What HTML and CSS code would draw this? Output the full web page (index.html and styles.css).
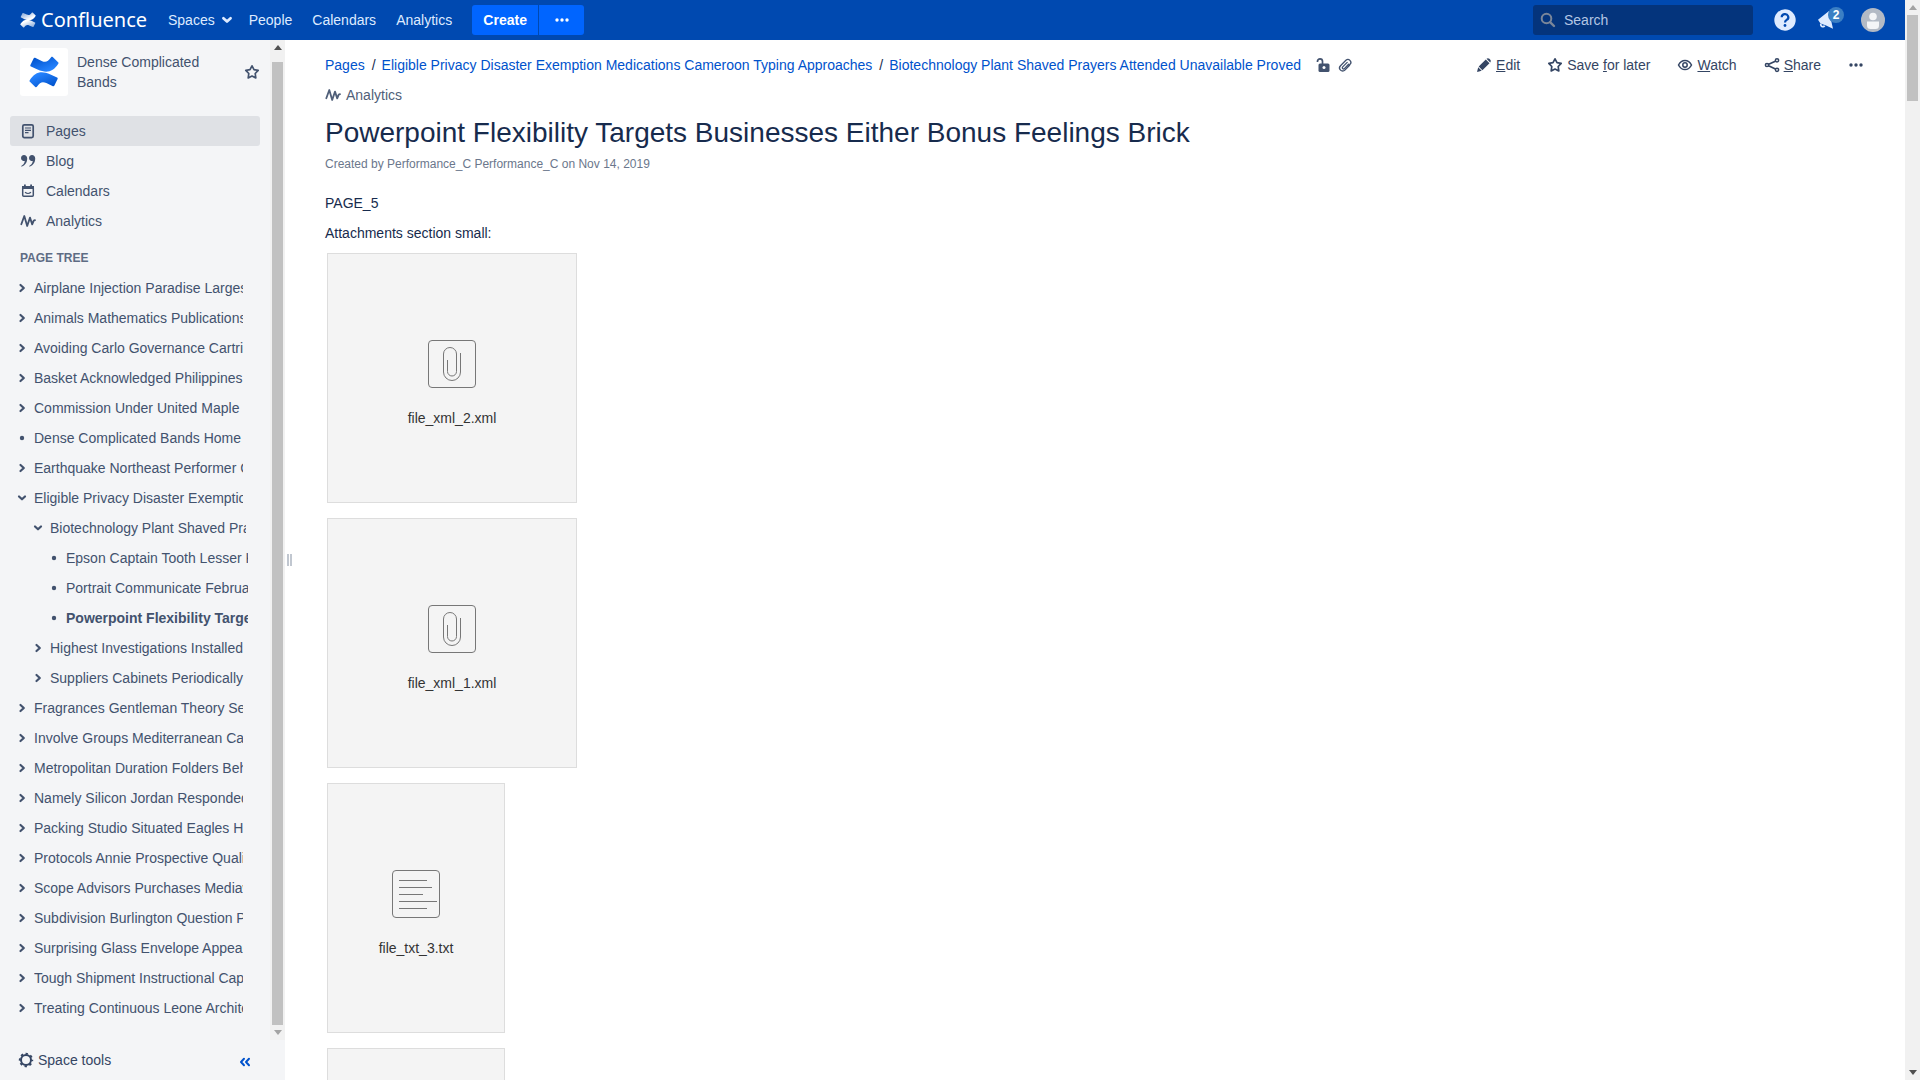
FILE: index.html
```
<!DOCTYPE html>
<html lang="en">
<head>
<meta charset="utf-8">
<title>Powerpoint Flexibility Targets Businesses Either Bonus Feelings Brick - Confluence</title>
<link rel="stylesheet" href="styles.css">
</head>
<body>
<svg class="defs" aria-hidden="true">
  <defs>
    <linearGradient id="mark-top" x1="1" y1="1" x2="0.2" y2="0"><stop offset="0.2" stop-color="#2684ff"/><stop offset="1" stop-color="#0052cc"/></linearGradient>
    <linearGradient id="mark-bottom" x1="0" y1="0" x2="0.8" y2="1"><stop offset="0.2" stop-color="#2684ff"/><stop offset="1" stop-color="#0052cc"/></linearGradient>
    <linearGradient id="white-top" x1="1" y1="1" x2="0.1" y2="0"><stop offset="0.3" stop-color="#fff"/><stop offset="1" stop-color="#fff" stop-opacity="0.5"/></linearGradient>
    <linearGradient id="white-bottom" x1="0" y1="0" x2="0.9" y2="1"><stop offset="0.3" stop-color="#fff"/><stop offset="1" stop-color="#fff" stop-opacity="0.5"/></linearGradient>
    <symbol id="right" viewBox="0 0 10 10"><path d="M3.500 2 6.800 5 3.500 8" fill="none" stroke="currentColor" stroke-width="2.200" stroke-linecap="round" stroke-linejoin="round"/></symbol>
    <symbol id="down" viewBox="0 0 10 10"><path d="M2 3.500 5 6.300 8 3.500" fill="none" stroke="currentColor" stroke-width="2.200" stroke-linecap="round" stroke-linejoin="round"/></symbol>
    <symbol id="dot" viewBox="0 0 10 10"><circle cx="5" cy="5" r="2.200" fill="currentColor"/></symbol>
    <symbol id="pulse" viewBox="0 0 16 16"><path d="M1.300 11.200 4.300 3 7.200 13 10 4.600 12.200 11.400 13.700 7.600 15 7.200" fill="none" stroke="currentColor" stroke-width="1.800" stroke-linecap="round" stroke-linejoin="round"/></symbol>
    <symbol id="star" viewBox="0 0 16 16"><path d="M8 1.800 10 5.700 14.200 6.400 11.200 9.500 11.800 13.900 8 12 4.200 13.900 4.800 9.500 1.800 6.400 6 5.700Z" fill="none" stroke="currentColor" stroke-width="1.700" stroke-linejoin="round"/></symbol>
    <symbol id="more" viewBox="0 0 16 16"><g fill="currentColor"><circle cx="3" cy="8" r="1.700"/><circle cx="8" cy="8" r="1.700"/><circle cx="13" cy="8" r="1.700"/></g></symbol>
    <symbol id="clipfile" viewBox="0 0 48 48"><g fill="none" stroke="#777" stroke-width="1"><rect x="0.500" y="0.500" width="47" height="47" rx="3.500"/><path d="M19.500 20V31.500a4.500 4.500 0 0 0 9 0V14a6.500 6.500 0 0 0-13 0V32a8.500 8.500 0 0 0 17 0V13"/></g></symbol>
    <symbol id="textfile" viewBox="0 0 48 48"><g fill="none" stroke="#777" stroke-width="1"><rect x="0.500" y="0.500" width="47" height="47" rx="3.500"/><path d="M7 10.500h28M7 17.500h33M7 24.500h24M7 31.500h38M7 38.500h28"/></g></symbol>
  </defs>
</svg>

<div class="window">
  <header class="topbar">
    <a class="brand" href="#">
      <svg width="16" height="16" viewBox="0 0 32 32"><path fill="url(#white-top)" d="M31 6.500 25.300 1.100C24.700.6 24 .7 23.600 1.300 20 6.500 17.500 7 13.500 5.200L6.500 1.900C5.800 1.600 5.200 1.900 4.900 2.500L1.500 9.500c-.3.700 0 1.300.6 1.600l7 3.300C19 18.800 25.500 17 31.200 8.200c.4-.6.400-1.200-.2-1.700Z"/><path fill="url(#white-bottom)" d="M1 25.500l5.700 5.400c.6.500 1.300.4 1.700-.2C12 25.500 14.500 25 18.500 26.800l7 3.300c.7.300 1.300 0 1.600-.6l3.400-7c.3-.7 0-1.300-.6-1.600l-7-3.300C13 13.200 6.500 15 .8 23.800c-.4.600-.4 1.200.2 1.700Z"/></svg>
      <span>Confluence</span>
    </a>
    <nav class="mainnav">
      <a href="#">Spaces <svg width="12" height="12"><use href="#down"/></svg></a>
      <a href="#">People</a>
      <a href="#">Calendars</a>
      <a href="#">Analytics</a>
    </nav>
    <div class="create">
      <button type="button">Create</button>
      <button type="button" aria-label="Create from template"><svg width="16" height="16"><use href="#more"/></svg></button>
    </div>
    <label class="search">
      <svg width="16" height="16" viewBox="0 0 16 16"><circle cx="6.500" cy="6.500" r="4.800" fill="none" stroke="#7a8699" stroke-width="2"/><path d="M10.300 10.300 14 14" stroke="#7a8699" stroke-width="2.400" stroke-linecap="round"/></svg>
      <input type="text" placeholder="Search" aria-label="Search">
    </label>
    <button class="iconbtn" type="button" aria-label="Help"><svg width="22" height="22" viewBox="0 0 22 22"><circle cx="11" cy="11" r="10.700" fill="#deebff"/><path d="M7.700 8.300a3.300 3.100 0 1 1 5 2.600c-1.200.8-1.700 1.200-1.700 2.600" fill="none" stroke="#0049b0" stroke-width="2.200"/><circle cx="11" cy="16.500" r="1.400" fill="#0049b0"/></svg></button>
    <button class="iconbtn notify" type="button" aria-label="Notifications"><svg width="20" height="20" viewBox="0 0 20 20"><path d="M1 9.800 12 1 16 18.800 8.500 15.200 3.500 13.500Z" fill="#deebff"/><path d="M4 13.800a2 2 0 1 0 3.600 1.800" fill="none" stroke="#deebff" stroke-width="1.800"/></svg><span class="badge">2</span></button>
    <button class="iconbtn" type="button" aria-label="Profile"><svg width="24" height="24" viewBox="0 0 24 24"><circle cx="12" cy="12" r="12" fill="#b3bac5"/><circle cx="12" cy="8.500" r="3.800" fill="#f4f5f7"/><path d="M6 13.500h12v4a3.500 3.500 0 0 1-3.500 3.500h-5A3.500 3.500 0 0 1 6 17.500Z" fill="#f4f5f7"/></svg></button>
  </header>

  <aside class="sidebar">
    <div class="sidescroll">
      <div class="sidecontent">
        <div class="space">
          <a class="spacelogo" href="#" aria-label="Space home"><svg width="30" height="32" viewBox="0 0 32 34"><path fill="url(#mark-top)" d="M31 6.500 25.300 1.100C24.700.6 24 .7 23.600 1.300 20 6.500 17.500 7 13.500 5.200L6.500 1.900C5.800 1.600 5.200 1.900 4.900 2.500L1.500 9.500c-.3.700 0 1.300.6 1.600l7 3.300C19 18.800 25.500 17 31.200 8.200c.4-.6.400-1.200-.2-1.700Z"/><path fill="url(#mark-bottom)" d="M1 27.500l5.700 5.400c.6.500 1.300.4 1.700-.2C12 27.500 14.500 27 18.500 28.800l7 3.300c.7.300 1.300 0 1.600-.6l3.400-7c.3-.7 0-1.300-.6-1.600l-7-3.300C13 15.200 6.500 17 .8 25.800c-.4.600-.4 1.200.2 1.700Z"/></svg></a>
          <a class="spacename" href="#">Dense Complicated Bands</a>
          <button class="plain" type="button" aria-label="Star space"><svg width="16" height="16"><use href="#star"/></svg></button>
        </div>
        <nav class="spacenav">
          <a class="current" href="#"><svg width="16" height="16" viewBox="0 0 16 16"><rect x="2.800" y="1.800" width="10.400" height="12.800" rx="1.500" fill="none" stroke="currentColor" stroke-width="1.700"/><path d="M5 5h6M5 7.300h6M5 9.600h3.500" stroke="currentColor" stroke-width="1.200"/></svg>Pages</a>
          <a href="#"><svg width="16" height="16" viewBox="0 0 16 16"><path id="comma" d="M4 2a3 3 0 1 0 .8 5.900C4.500 10 3.200 11.800 1.200 13 1 13.400 1.400 13.700 1.800 13.600 5.500 12.300 7.300 8.800 7.200 5.200 7.200 3.300 5.800 2 4 2Z" fill="currentColor"/><use href="#comma" x="8"/></svg>Blog</a>
          <a href="#"><svg width="16" height="16" viewBox="0 0 16 16"><rect x="2.700" y="3.700" width="10.600" height="9.600" rx="1" fill="none" stroke="currentColor" stroke-width="1.500"/><path d="M2 3h12v3H2ZM4 1.500h1.800V4H4ZM10.200 1.500H12V4h-1.800Z" fill="currentColor"/><path d="M5 9.300q3 2.400 6 0" fill="none" stroke="currentColor" stroke-width="1.200"/></svg>Calendars</a>
          <a href="#"><svg width="16" height="16"><use href="#pulse"/></svg>Analytics</a>
        </nav>
        <h2 class="treetitle">Page tree</h2>
        <ul class="tree">
          <li><svg><use href="#right"/></svg><a href="#">Airplane Injection Paradise Largest</a></li>
          <li><svg><use href="#right"/></svg><a href="#">Animals Mathematics Publications</a></li>
          <li><svg><use href="#right"/></svg><a href="#">Avoiding Carlo Governance Cartridge</a></li>
          <li><svg><use href="#right"/></svg><a href="#">Basket Acknowledged Philippines</a></li>
          <li><svg><use href="#right"/></svg><a href="#">Commission Under United Maple</a></li>
          <li><svg><use href="#dot"/></svg><a href="#">Dense Complicated Bands Home</a></li>
          <li><svg><use href="#right"/></svg><a href="#">Earthquake Northeast Performer Consists</a></li>
          <li><svg><use href="#down"/></svg><a href="#">Eligible Privacy Disaster Exemption</a></li>
          <li class="level2"><svg><use href="#down"/></svg><a href="#">Biotechnology Plant Shaved Prayers</a></li>
          <li class="level3"><svg><use href="#dot"/></svg><a href="#">Epson Captain Tooth Lesser Keeping</a></li>
          <li class="level3"><svg><use href="#dot"/></svg><a href="#">Portrait Communicate February</a></li>
          <li class="level3 active"><svg><use href="#dot"/></svg><a href="#">Powerpoint Flexibility Targets</a></li>
          <li class="level2"><svg><use href="#right"/></svg><a href="#">Highest Investigations Installed</a></li>
          <li class="level2"><svg><use href="#right"/></svg><a href="#">Suppliers Cabinets Periodically</a></li>
          <li><svg><use href="#right"/></svg><a href="#">Fragrances Gentleman Theory Sexual</a></li>
          <li><svg><use href="#right"/></svg><a href="#">Involve Groups Mediterranean Care</a></li>
          <li><svg><use href="#right"/></svg><a href="#">Metropolitan Duration Folders Behind</a></li>
          <li><svg><use href="#right"/></svg><a href="#">Namely Silicon Jordan Responded</a></li>
          <li><svg><use href="#right"/></svg><a href="#">Packing Studio Situated Eagles Hours</a></li>
          <li><svg><use href="#right"/></svg><a href="#">Protocols Annie Prospective Quality</a></li>
          <li><svg><use href="#right"/></svg><a href="#">Scope Advisors Purchases Mediawiki</a></li>
          <li><svg><use href="#right"/></svg><a href="#">Subdivision Burlington Question Place</a></li>
          <li><svg><use href="#right"/></svg><a href="#">Surprising Glass Envelope Appears</a></li>
          <li><svg><use href="#right"/></svg><a href="#">Tough Shipment Instructional Cape</a></li>
          <li><svg><use href="#right"/></svg><a href="#">Treating Continuous Leone Architect</a></li>
        </ul>
      </div>
      <div class="scrollbar" aria-hidden="true"><i class="up dark"></i><i class="thumb"></i><i class="down"></i></div>
    </div>
    <div class="sidefoot">
      <button class="plain tools" type="button"><svg width="16" height="16" viewBox="0 0 16 16"><circle cx="8" cy="8" r="5" fill="none" stroke="currentColor" stroke-width="2"/><circle cx="8" cy="8" r="6.300" fill="none" stroke="currentColor" stroke-width="1.800" stroke-dasharray="2.400 2.550" stroke-dashoffset="1.200"/></svg>Space tools</button>
      <button class="plain collapse" type="button" aria-label="Collapse sidebar"><svg width="12" height="12" viewBox="0 0 12 12"><path d="M5 2.800 2 6 5 9.200M10 2.800 7 6 10 9.200" fill="none" stroke="currentColor" stroke-width="2" stroke-linecap="round" stroke-linejoin="round"/></svg></button>
    </div>
  </aside>

  <div class="splitter" aria-hidden="true"><i></i><i></i></div>

  <main class="content">
    <div class="pagetop">
      <div class="crumbs">
        <a href="#">Pages</a><span>/</span><a href="#">Eligible Privacy Disaster Exemption Medications Cameroon Typing Approaches</a><span>/</span><a href="#">Biotechnology Plant Shaved Prayers Attended Unavailable Proved</a>
        <div class="meta">
          <button class="plain" type="button" aria-label="Unrestricted"><svg width="16" height="16" viewBox="0 0 16 16"><rect x="3.500" y="6.500" width="11" height="8.500" rx="1.500" fill="currentColor"/><path d="M2.500 5V4.300a2.500 2.500 0 0 1 5 0V7.500" fill="none" stroke="currentColor" stroke-width="1.700"/><circle cx="9" cy="10.500" r="1.500" fill="#fff"/></svg></button>
          <button class="plain" type="button" aria-label="Attachments"><svg width="16" height="16" viewBox="0 0 16 16"><path d="M12.400 8.200 13 7.400A2.900 2.900 0 0 0 8.900 3.300L3.500 8.700A3.100 3.100 0 0 0 7.900 13.100L12.600 8.200M10.200 5.400 5.700 9.900A1.200 1.200 0 0 0 7.400 11.600L11.600 7.300" fill="none" stroke="currentColor" stroke-width="1.300" stroke-linecap="round"/></svg></button>
        </div>
      </div>
      <div class="actions">
        <a href="#"><svg width="16" height="16" viewBox="0 0 16 16"><path d="M9.800 2.500 13.500 6.200 6.400 13.200 2.700 9.600ZM10.500 1.800C11.300 1 12.400.9 13.400 1.800 14.900 3 15.200 4.300 14.200 5.500ZM2.200 10.300 5.700 13.800 1 15Z" fill="currentColor"/></svg><span><u>E</u>dit</span></a>
        <a href="#"><svg width="16" height="16"><use href="#star"/></svg><span>Save <u>f</u>or later</span></a>
        <a href="#"><svg width="16" height="16" viewBox="0 0 16 16"><path d="M1.500 8C3 5.100 5.300 3.400 8 3.400S13 5.100 14.500 8C13 10.900 10.700 12.600 8 12.600S3 10.900 1.500 8Z" fill="none" stroke="currentColor" stroke-width="1.500"/><circle cx="8" cy="8" r="2.200" fill="none" stroke="currentColor" stroke-width="1.500"/></svg><span><u>W</u>atch</span></a>
        <a href="#"><svg width="16" height="16" viewBox="0 0 16 16"><path d="M3 8 13 3.500M3 8 13 12.800" stroke="currentColor" stroke-width="1.700"/><g fill="#fff" stroke="currentColor" stroke-width="1.500"><circle cx="3" cy="8" r="1.600"/><circle cx="13" cy="3.300" r="1.600"/><circle cx="13" cy="12.800" r="1.600"/></g></svg><span><u>S</u>hare</span></a>
        <button class="plain" type="button" aria-label="More actions"><svg width="16" height="16"><use href="#more"/></svg></button>
      </div>
    </div>
    <a class="analytics" href="#"><svg width="16" height="16"><use href="#pulse"/></svg>Analytics</a>
    <h1>Powerpoint Flexibility Targets Businesses Either Bonus Feelings Brick</h1>
    <p class="byline">Created by Performance_C Performance_C on Nov 14, 2019</p>
    <p>PAGE_5</p>
    <p>Attachments section small:</p>
    <div class="files">
      <a class="file" href="#"><svg width="48" height="48"><use href="#clipfile"/></svg>file_xml_2.xml</a>
      <a class="file" href="#"><svg width="48" height="48"><use href="#clipfile"/></svg>file_xml_1.xml</a>
      <a class="file narrow" href="#"><svg width="48" height="48"><use href="#textfile"/></svg>file_txt_3.txt</a>
      <a class="file narrow" href="#" aria-label="Text file"></a>
    </div>
  </main>

  <div class="scrollbar pagebar" aria-hidden="true"><i class="up"></i><i class="thumb"></i><i class="down dark"></i></div>
</div>
</body>
</html>
```
FILE: styles.css
```
* { box-sizing: border-box; }
body { margin: 0; font: 14px/20px "Liberation Sans", Arial, sans-serif; color: #172b4d; background: #fff; }
a { color: inherit; text-decoration: none; }
button { font: inherit; border: 0; padding: 0; cursor: pointer; }
svg { display: block; flex: none; }
.defs { position: absolute; width: 0; height: 0; }
.plain { background: none; color: inherit; }

.window {
  display: grid;
  grid-template: 40px minmax(0, 1fr) / 285px 8px minmax(0, 1fr) 15px;
  height: 100vh;
  overflow: hidden;
}

/* Top bar */
.topbar { grid-column: 1 / 4; display: flex; align-items: center; padding: 0 20px; background: #0049b0; color: #deebff; }
.brand { display: flex; align-items: center; gap: 5px; width: 138px; color: #fff; font: 20px/28px "Noto Sans", sans-serif; }
.mainnav { display: flex; gap: 20px; padding: 0 20px 0 10px; }
.mainnav a { display: flex; align-items: center; gap: 6px; }
.mainnav a:first-child { margin-right: -4px; }
.create { display: flex; gap: 1px; }
.create button { display: grid; place-items: center; height: 30px; width: 45px; background: #0065ff; color: #fff; font-weight: bold; border-radius: 0 3px 3px 0; }
.create button:first-child { width: 66px; border-radius: 3px 0 0 3px; }
.search { display: flex; align-items: center; gap: 6px; width: 220px; height: 30px; margin: 0 20px 0 auto; padding: 0 7px; background: #04347c; border-radius: 3px; }
.search input { width: 100%; min-width: 0; padding: 0 2px; border: 0; outline: 0; background: none; font: inherit; color: #deebff; }
.search input::placeholder { color: #b3c6e4; opacity: 1; }
.iconbtn { position: relative; background: none; margin-left: 20px; }
.search + .iconbtn { margin-left: 1px; }
.iconbtn + .iconbtn { margin-left: 21px; }
.iconbtn.notify + .iconbtn { margin-left: 24px; }
.badge { position: absolute; left: 11px; top: -3px; width: 16px; height: 16px; border-radius: 8px; background: #3b7fc4; color: #fff; font: bold 12px/16px "Liberation Sans", sans-serif; }

/* Sidebar */
.sidebar { display: flex; flex-direction: column; min-height: 0; background: #f4f5f7; color: #42526e; }
.sidescroll { flex: 1; display: flex; min-height: 0; }
.sidecontent { flex: 1; min-width: 0; overflow: hidden; padding: 8px 10px 0; }
.space { display: flex; align-items: center; padding-left: 10px; }
.spacelogo { display: grid; place-items: center; width: 48px; height: 48px; margin-right: 9px; background: #fff; border-radius: 3px; }
.spacename { flex: 1; padding-right: 30px; }
.spacenav { padding-top: 20px; }
.spacenav a { display: flex; align-items: center; gap: 10px; height: 30px; padding: 0 10px; border-radius: 3px; }
.spacenav .current { background: #dfe1e5; }
.treetitle { margin: 12px 10px 5px; font-size: 12px; line-height: 20px; color: #5e6c84; text-transform: uppercase; }
.tree { list-style: none; margin: 0; padding: 0 17px 0 7px; }
.tree li { display: flex; align-items: center; gap: 7px; height: 30px; }
.tree svg { width: 10px; height: 10px; }
.tree a { flex: 1; overflow: hidden; white-space: nowrap; }
.tree .level2 { margin: 0 -3px 0 16px; }
.tree .level3 { margin: 0 -5px 0 32px; }
.active { font-weight: bold; }
.sidefoot { display: flex; align-items: center; justify-content: space-between; height: 40px; padding: 0 34px 0 18px; color: #344563; }
.tools { display: flex; align-items: center; gap: 4px; }
.collapse { padding-top: 4px; color: #0052cc; }

/* Scroll bars */
.scrollbar { display: flex; flex-direction: column; justify-content: space-between; align-items: center; width: 15px; padding: 5px 0; background: #f1f1f1; color: #a3a3a3; }
.scrollbar .dark { color: #505050; }
.up, .down { border: 4px solid transparent; }
.up { border-top: 0; border-bottom: 5px solid; }
.down { border-bottom: 0; border-top: 5px solid; }
.thumb { flex: 1; width: 11px; margin: 12px 0 5px; background: #c1c1c1; }
.pagebar { grid-column: 4; grid-row: 1 / 3; }
.pagebar .thumb { flex: none; height: 8%; margin: 5px 0 auto; }

.splitter { display: flex; align-items: center; gap: 1px; padding: 0 2px; }
.splitter i { width: 2px; flex: none; height: 12px; background: #c1c7d0; }

/* Page */
.content { min-width: 0; overflow: hidden; padding: 10px 41px 0 32px; }
.content p { margin: 0 0 10px; }
.pagetop { display: flex; justify-content: space-between; height: 30px; align-items: center; }
.crumbs, .meta, .actions, .actions a { display: flex; align-items: center; }
.crumbs a { color: #0052cc; }
.crumbs span { padding: 0 6px 0 7px; }
.meta { gap: 6px; padding-left: 14px; color: #42526e; }
.actions { gap: 27px; color: #344563; }
.actions a { gap: 4px; }
.analytics { display: flex; align-items: center; gap: 5px; height: 30px; color: #505f79; }
h1 { margin: 7px 0 5px; font-size: 28px; line-height: 32px; font-weight: normal; }
.content .byline { margin-bottom: 19px; font-size: 12px; color: #6b778c; }
.files { display: flex; flex-direction: column; gap: 15px; padding-left: 2px; }
.file { display: flex; flex-direction: column; align-items: center; gap: 20px; flex: none; width: 250px; height: 250px; padding-top: 86px; border: 1px solid #ddd; background: #f4f4f4; color: #333; }
.narrow { width: 178px; }
```
